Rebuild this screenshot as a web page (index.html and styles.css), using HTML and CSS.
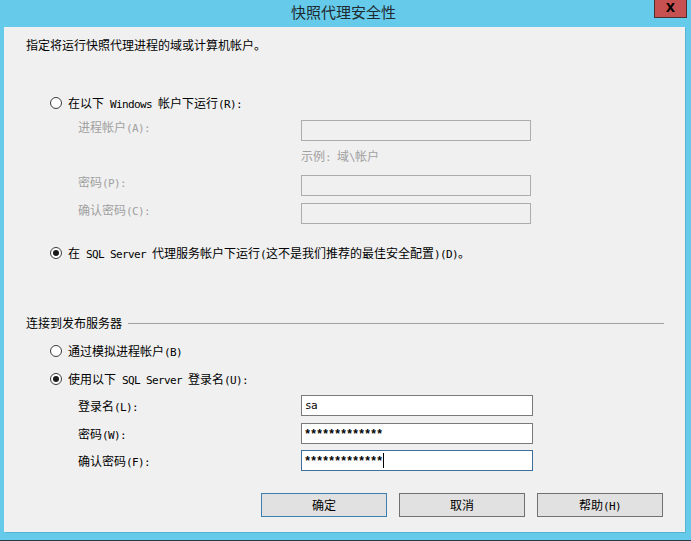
FILE: index.html
```html
<!DOCTYPE html>
<html lang="zh-CN">
<head>
<meta charset="utf-8">
<title>快照代理安全性</title>
<link rel="stylesheet" href="styles.css">
</head>
<body>
<div class="window">
  <div class="titlebar">
    <span class="title-spacer"></span>
    <span class="title">快照代理安全性</span>
    <span class="close-wrap"><span class="close">X</span></span>
  </div>
  <div class="client">
    <p class="intro">指定将运行快照代理进程的域或计算机帐户。</p>

    <div class="radio-row r1"><span class="radio"></span><span>在以下<span class="lat"> Windows </span>帐户下运行<span class="lat">(R):</span></span></div>

    <div class="acct">
      <div class="frow"><span class="flabel dis">进程帐户<span class="lat">(A):</span></span><span class="field dis"></span></div>
      <div class="hint">示例<span class="lat">: </span>域<span class="lat">\</span>帐户</div>
      <div class="frow f2"><span class="flabel dis">密码<span class="lat">(P):</span></span><span class="field dis"></span></div>
      <div class="frow f3"><span class="flabel dis">确认密码<span class="lat">(C):</span></span><span class="field dis"></span></div>
    </div>

    <div class="radio-row r2"><span class="radio on"></span><span>在<span class="lat"> SQL Server </span>代理服务帐户下运行<span class="lat">(</span>这不是我们推荐的最佳安全配置<span class="lat">)(D)</span>。</span></div>

    <div class="group"><span>连接到发布服务器</span><span class="rule"></span></div>

    <div class="radio-row r3"><span class="radio"></span><span>通过模拟进程帐户<span class="lat">(B)</span></span></div>
    <div class="radio-row r4"><span class="radio on"></span><span>使用以下<span class="lat"> SQL Server </span>登录名<span class="lat">(U):</span></span></div>

    <div class="login">
      <div class="lrow"><span class="llabel">登录名<span class="lat">(L):</span></span><span class="field en">sa</span></div>
      <div class="lrow l2"><span class="llabel">密码<span class="lat">(W):</span></span><span class="field en pw">*************</span></div>
      <div class="lrow l3"><span class="llabel">确认密码<span class="lat">(F):</span></span><span class="field en pw focus">*************<span class="caret"></span></span></div>
    </div>

    <div class="buttons">
      <span class="btn default">确定</span>
      <span class="btn">取消</span>
      <span class="btn">帮助<span class="lat">(H)</span></span>
    </div>
  </div>
  <div class="bottom-edge"></div>
</div>
</body>
</html>
```

FILE: styles.css
```css
html, body {
  margin: 0;
  padding: 0;
}
body {
  width: 691px;
  height: 541px;
  overflow: hidden;
  background: #66cbea;
  font-family: "Noto Sans CJK SC", "Liberation Sans", sans-serif;
  font-size: 12px;
  color: #000;
}
.window {
  width: 691px;
  height: 541px;
  display: flex;
  flex-direction: column;
}
.titlebar {
  height: 27px;
  display: grid;
  grid-template-columns: 1fr auto 1fr;
}
.title {
  font-size: 15px;
  line-height: 24px;
  color: #1f2a30;
  padding-right: 4px;
}
.close-wrap {
  display: flex;
  justify-content: flex-end;
  padding-right: 4px;
}
.close {
  width: 33px;
  height: 18px;
  box-sizing: border-box;
  background: #c75050;
  border: 1px solid #4a3030;
  border-top: none;
  color: #000;
  font-family: "DejaVu Sans", sans-serif;
  font-weight: bold;
  font-size: 12px;
  line-height: 17px;
  text-align: center;
}
.lat {
  font-family: "DejaVu Sans Mono", "Liberation Mono", monospace;
  font-size: 11px;
  letter-spacing: -0.62px;
  line-height: 0;
  white-space: pre;
}
.client {
  height: 505px;
  margin: 0 6px 0 4px;
  background: #f0f0f0;
  box-shadow: 1px 1px 0 #58b3d2;
  padding: 10px 21px 0 22px;
  box-sizing: border-box;
  display: flex;
  flex-direction: column;
}
.intro {
  margin: 0;
  line-height: 16px;
}
.radio-row {
  display: flex;
  align-items: center;
  gap: 6px;
  margin-left: 24px;
  line-height: 16px;
  height: 16px;
}
.radio {
  width: 12px;
  height: 12px;
  box-sizing: border-box;
  border-radius: 50%;
  border: 1px solid #3c3c3c;
  background: #fff;
  display: flex;
  align-items: center;
  justify-content: center;
}
.radio.on::after {
  content: "";
  width: 6px;
  height: 6px;
  border-radius: 50%;
  background: #1a1a1a;
}
.r1 { margin-top: 42px; }
.acct {
  margin-left: 52px;
  margin-top: 9px;
  display: flex;
  flex-direction: column;
}
.frow {
  display: flex;
  align-items: flex-start;
  height: 21px;
}
.flabel {
  width: 223px;
  line-height: 16px;
  height: 16px;
  margin-top: -1px;
}
.dis { color: #a0a0a0; }
.field {
  display: block;
  width: 230px;
  height: 21px;
  box-sizing: border-box;
  border: 1px solid #adadad;
  background: #f0f0f0;
}
.hint {
  margin-left: 223px;
  margin-top: 7px;
  line-height: 16px;
  height: 16px;
  color: #a0a0a0;
}
.f2 { margin-top: 11px; }
.f3 { margin-top: 7px; }
.r2 { margin-top: 21px; }
.group {
  margin-top: 54px;
  display: flex;
  align-items: center;
  gap: 6px;
  line-height: 16px;
  height: 16px;
}
.rule {
  flex: 1;
  height: 0;
  border-top: 1px solid #a0a0a0;
}
.r3 { margin-top: 12px; }
.r4 { margin-top: 12px; }
.login {
  margin-left: 52px;
  margin-top: 8px;
  display: flex;
  flex-direction: column;
}
.lrow {
  display: flex;
  align-items: center;
  height: 21px;
}
.l2 { margin-top: 7px; }
.l3 { margin-top: 6px; }
.llabel {
  width: 223px;
  line-height: 16px;
  height: 16px;
  margin-top: 1px;
}
.field.en {
  width: 232px;
  background: #fff;
  border-color: #7a7a7a;
  font-family: "DejaVu Sans Mono", monospace;
  font-size: 11px;
  letter-spacing: -0.6px;
  line-height: 19px;
  padding-left: 3px;
  display: flex;
  align-items: center;
}
.field.en.pw {
  font-family: "Liberation Mono", monospace;
  font-weight: bold;
  font-size: 12px;
  letter-spacing: -1.2px;
  padding-top: 4px;
  padding-left: 2px;
}
.field.en.focus {
  border-color: #3c6e9e;
}
.caret {
  display: inline-block;
  width: 0;
  height: 15px;
  margin-top: -4px;
  margin-left: 1px;
  border-left: 1px solid #000;
}
.buttons {
  margin-top: 22px;
  display: flex;
  justify-content: flex-end;
  gap: 12px;
  margin-right: 1px;
}
.btn {
  width: 126px;
  height: 24px;
  box-sizing: border-box;
  border: 1px solid #707070;
  background: #e1e1e1;
  text-align: center;
  line-height: 22px;
}
.btn.default {
  border-color: #3c7fb1;
}
.bottom-edge {
  margin-top: auto;
  height: 1px;
  background: #2a3a40;
}
```
